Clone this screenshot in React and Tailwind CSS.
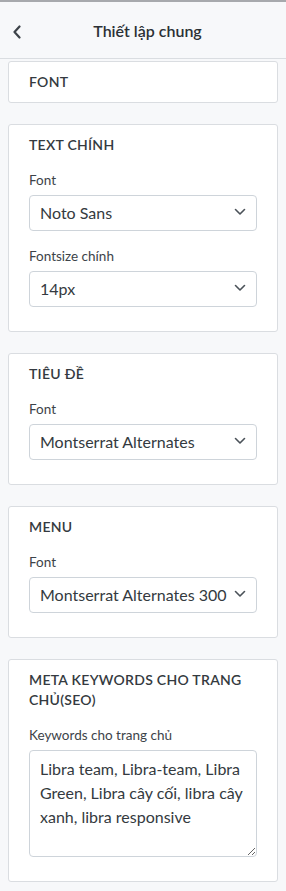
import React from "react";

const font = { fontFamily: 'Lato, "Noto Sans", sans-serif' };

function Chevron() {
  return (
    <svg width="12" height="8" viewBox="0 0 12 8" className="absolute right-[10px] top-[12px]">
      <path d="M1.5 1.5 L6 6 L10.5 1.5" fill="none" stroke="#4b5259" strokeWidth="1.6" strokeLinecap="round" strokeLinejoin="round" />
    </svg>
  );
}

function Select({ value }) {
  return (
    <div className="relative h-9 rounded-[4px] border border-[#ced4da] bg-white pl-[10px] pr-8 flex items-center text-[16px] text-[#343a40] whitespace-nowrap overflow-hidden">
      {value}
      <Chevron />
    </div>
  );
}

function Field({ label, children, first }) {
  return (
    <div className={first ? "mt-[5px]" : "mt-[15px]"}>
      <div className="text-[13.5px] leading-5 text-[#3d4349] mb-[5px]">{label}</div>
      {children}
    </div>
  );
}

function Card({ title, children }) {
  return (
    <div className="rounded-[3px] border border-[#dadde1] bg-white px-5">
      <div className="py-[10px] text-[14px] leading-5 font-semibold uppercase tracking-[0.02em] text-[#343a40]">
        {title}
      </div>
      {children && <div className="pb-[24px]">{children}</div>}
    </div>
  );
}

export default function App() {
  return (
    <div className="w-[286px] min-h-[891px] bg-[#f7f8fa] border-t-2 border-[#a7a9ad]" style={font}>
      <div className="relative h-[57px] border-b border-[#dadde1] flex items-center justify-center">
        <svg width="10" height="14" viewBox="0 0 10 14" className="absolute left-[12px] top-[23px]">
          <path d="M7.5 1.5 L2.5 7 L7.5 12.5" fill="none" stroke="#3d4349" strokeWidth="2.2" strokeLinecap="round" strokeLinejoin="round" />
        </svg>
        <div className="text-[16px] font-semibold text-[#2b3035] mt-[2px] ml-[9px]">Thiết lập chung</div>
      </div>
      <div className="px-2 pt-[2px] pb-2 flex flex-col gap-[21px]">
        <Card title="Font" />
        <Card title="Text chính">
          <Field label="Font" first><Select value="Noto Sans" /></Field>
          <Field label="Fontsize chính"><Select value="14px" /></Field>
        </Card>
        <Card title="Tiêu đề">
          <Field label="Font" first><Select value="Montserrat Alternates" /></Field>
        </Card>
        <Card title="Menu">
          <Field label="Font" first><Select value="Montserrat Alternates 300" /></Field>
        </Card>
        <Card title="Meta keywords cho trang chủ(SEO)">
          <Field label="Keywords cho trang chủ" first>
            <textarea
              className="block w-full h-[107px] rounded-[4px] border border-[#ced4da] bg-white px-[10px] py-[6px] text-[16px] leading-6 text-[#343a40] outline-none resize-y"
              style={font}
              defaultValue="Libra team, Libra-team, Libra Green, Libra cây cối, libra cây xanh, libra responsive"
            />
          </Field>
        </Card>
      </div>
    </div>
  );
}
